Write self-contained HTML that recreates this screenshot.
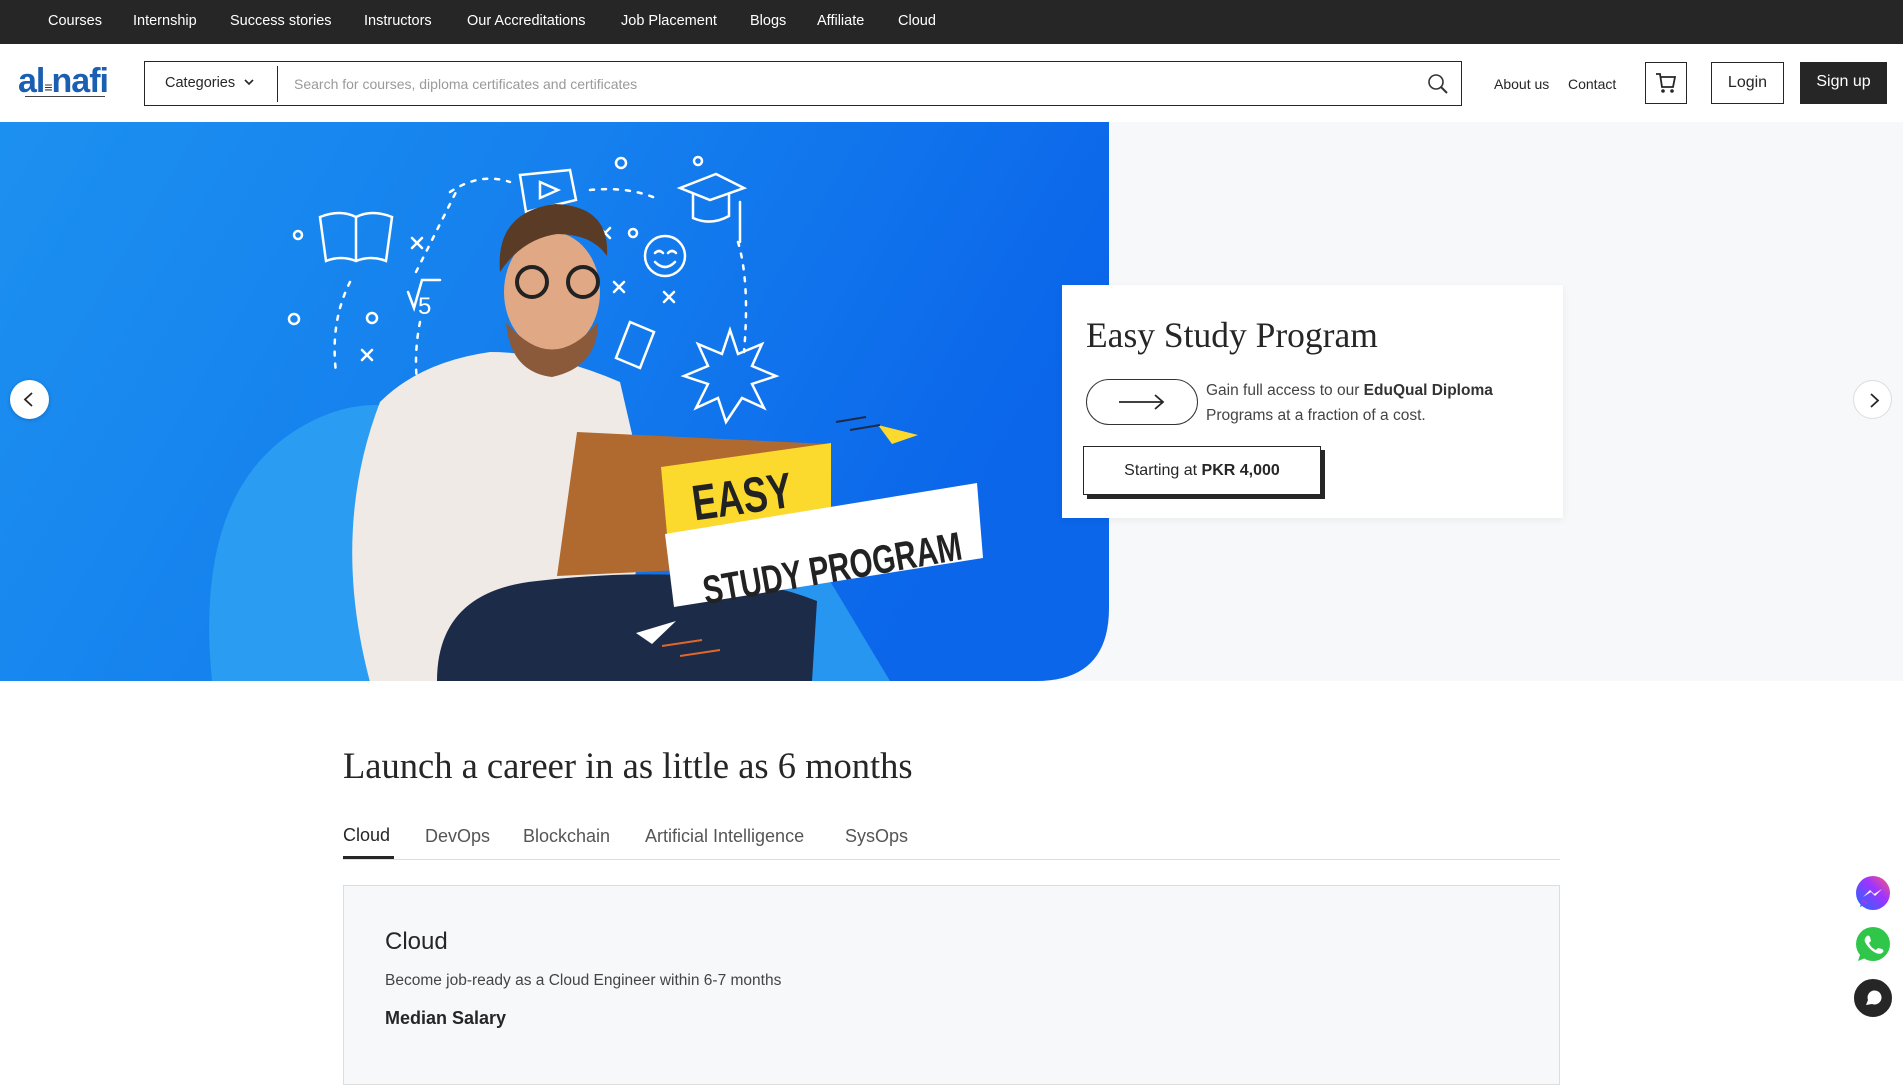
<!DOCTYPE html>
<html><head><meta charset="utf-8"><style>
*{margin:0;padding:0;box-sizing:border-box}
body{width:1903px;height:1039px;overflow:hidden;background:#fff;font-family:"Liberation Sans",sans-serif;color:#262626;position:relative}
.top{position:absolute;left:0;top:0;width:1903px;height:44px;background:#262626}
.top span{position:absolute;top:13px;color:#fff;font-size:14.5px}
.hdr{position:absolute;top:44px;left:0;width:1903px;height:78px;background:#fff}
.abs{position:absolute}
.hero{position:absolute;top:122px;left:0;width:1903px;height:559px;background:#f7f8fa}
</style></head><body>
<div class="top">
<span style="left:48px">Courses</span><span style="left:133px">Internship</span><span style="left:230px">Success stories</span><span style="left:364px">Instructors</span><span style="left:467px">Our Accreditations</span><span style="left:621px">Job Placement</span><span style="left:750px">Blogs</span><span style="left:817px">Affiliate</span><span style="left:898px">Cloud</span>
</div>
<div class="hdr">
 <div class="abs" style="left:18px;top:22px;font-size:34px;font-weight:bold;color:#1b5fb3;letter-spacing:-1px;line-height:30px;font-family:'Liberation Sans Narrow','Liberation Sans',sans-serif">al<span style="font-size:14px;color:#333">≡</span>nafi</div>
 <div class="abs" style="left:25px;top:52px;width:80px;height:3px;border-top:1px solid #444"></div>
 <div class="abs" style="left:144px;top:17px;width:1318px;height:45px;border:1.5px solid #262626"></div>
 <div class="abs" style="left:165px;top:31px;font-size:14.5px;color:#262626">Categories <svg width="12" height="10" viewBox="0 0 12 10" style="margin-left:4px"><path d="M2 3l4 4 4-4" fill="none" stroke="#262626" stroke-width="1.6"/></svg></div>
 <div class="abs" style="left:277px;top:22px;width:1px;height:36px;background:#262626"></div>
 <div class="abs" style="left:294px;top:32px;font-size:14px;color:#9a9a9a">Search for courses, diploma certificates and certificates</div>
 <svg class="abs" style="left:1426px;top:28px" width="24" height="24" viewBox="0 0 24 24"><circle cx="10" cy="10" r="7" fill="none" stroke="#333" stroke-width="1.6"/><path d="M15 15l6 6" stroke="#333" stroke-width="2"/></svg>
 <div class="abs" style="left:1494px;top:32px;font-size:14px">About us</div>
 <div class="abs" style="left:1568px;top:32px;font-size:14px">Contact</div>
 <div class="abs" style="left:1645px;top:18px;width:42px;height:42px;border:1.5px solid #262626"></div>
 <svg class="abs" style="left:1654px;top:27px" width="24" height="24" viewBox="0 0 24 24"><path d="M2 3h4l2 13h11l2-10H7" fill="none" stroke="#262626" stroke-width="1.8"/><circle cx="9" cy="20" r="1.8" fill="#262626"/><circle cx="18" cy="20" r="1.8" fill="#262626"/></svg>
 <div class="abs" style="left:1711px;top:18px;width:73px;height:42px;border:1.5px solid #262626;text-align:center;line-height:40px;font-size:16px">Login</div>
 <div class="abs" style="left:1800px;top:18px;width:87px;height:42px;background:#262626;color:#fff;text-align:center;line-height:40px;font-size:16px">Sign up</div>
</div>
<div class="hero">
<svg class="abs" style="left:0;top:0" width="1109" height="559" viewBox="0 0 1109 559">
<defs><linearGradient id="g" x1="0" y1="0" x2="1" y2="0.3"><stop offset="0" stop-color="#1c90f0"/><stop offset="0.5" stop-color="#1580ee"/><stop offset="1" stop-color="#0b66ea"/></linearGradient></defs>
<path d="M0 0H1109V486Q1109 559 1036 559H0Z" fill="url(#g)"/>
<g fill="none" stroke="#fff" stroke-width="2.5" stroke-linecap="round">
<path d="M320 95q20-8 36 0q16-8 36 0l-6 44q-15-6-30 0q-15-6-30 0z"/><path d="M356 95v44"/>
<path d="M520 53l50-5 6 30-50 12z"/><path d="M540 60l18 8-18 8z"/>
<path d="M680 66l36-14 28 14-34 12z"/><path d="M693 72v24q18 8 36-2v-22"/><path d="M740 80v40"/>
<circle cx="665" cy="134" r="20"/><path d="M655 131q4-4 8 0M668 131q4-4 8 0M655 140q10 10 20 0"/>
<path d="M726 300l-8-24-22 10 12-24-24-8 24-10-10-22 24 10 8-24 8 24 24-10-10 22 24 10-24 8 12 24-22-10z"/>
<path d="M630 200l24 10-14 36-24-10z"/>
<path d="M408 170l6 16 8-28h18"/><text x="418" y="192" fill="#fff" stroke="none" font-size="24" font-family="Liberation Sans">5</text>
<path d="M450 70q30-20 60-10M590 68q40-4 70 10M416 150q20-40 40-80M350 160q-20 40-14 90M420 200q-8 40 0 80M738 120q12 40 6 110" stroke-dasharray="4 8"/>
<path d="M412 116l10 10M422 116l-10 10M600 106l10 10M610 106l-10 10M362 228l10 10M372 228l-10 10M614 160l10 10M624 160l-10 10M664 170l10 10M674 170l-10 10"/>
<circle cx="298" cy="113" r="4"/><circle cx="633" cy="111" r="4"/><circle cx="698" cy="39" r="4"/><circle cx="621" cy="41" r="5"/><circle cx="294" cy="197" r="5"/><circle cx="372" cy="196" r="5"/>
</g>
<path d="M212 559q-20-200 100-260q80-40 160 20l100 240z" fill="#2a9cf2"/>
<path d="M700 559q40-120 130-100l60 100z" fill="#2796f0"/>
<path d="M380 280q40-40 110-50q60 0 130 30l30 130-40 170H370q-40-150 10-280z" fill="#efeae6"/>
<ellipse cx="552" cy="170" rx="48" ry="60" fill="#e0a885"/>
<path d="M500 150q-5-60 55-68q55 2 52 52q-15-22-50-22q-35 5-57 38z" fill="#5a3b25"/>
<path d="M506 200q46 55 92 0q0 45-46 55q-42-5-46-55z" fill="#8a5a3a"/>
<circle cx="532" cy="160" r="15" fill="none" stroke="#222" stroke-width="4"/><circle cx="583" cy="160" r="15" fill="none" stroke="#222" stroke-width="4"/>
<path d="M577 310l250 12-20 120-250 12z" fill="#b06a30"/>
<path d="M437 559q0-90 100-100q180-20 280 20l-5 80z" fill="#1c2b48"/>
<polygon points="661,345 831,321 831,400 667,412" fill="#fbd92d"/>
<polygon points="665,412 977,361 983,436 674,485" fill="#fff"/>
<text x="692" y="392" transform="rotate(-8 740 375)" textLength="100" lengthAdjust="spacingAndGlyphs" font-family="'Liberation Sans Narrow','Liberation Sans',sans-serif" font-weight="bold" font-size="50" fill="#222">EASY</text>
<text x="700" y="462" transform="rotate(-10 820 440)" textLength="262" lengthAdjust="spacingAndGlyphs" font-family="'Liberation Sans Narrow','Liberation Sans',sans-serif" font-weight="bold" font-size="40" fill="#222">STUDY PROGRAM</text>
<polygon points="878,303 918,313 892,322" fill="#fbd92d"/>
<polygon points="636,511 676,499 652,522" fill="#fff"/>
<path d="M662 524l40-6M680 534l40-6" stroke="#e0662a" stroke-width="2"/>
<path d="M836 300l30-5M850 308l30-5" stroke="#1a2a48" stroke-width="2"/>
</svg>
<div class="abs" style="left:1062px;top:163px;width:501px;height:233px;background:#fff;box-shadow:0 2px 8px rgba(0,0,0,0.06)">
 <div class="abs" style="left:24px;top:29px;font-family:'Liberation Serif',serif;font-size:35.5px;color:#262626;white-space:nowrap">Easy Study Program</div>
 <div class="abs" style="left:24px;top:94px;width:112px;height:46px;border:1.2px solid #333;border-radius:23px"></div>
 <svg class="abs" style="left:55px;top:107px" width="50" height="20" viewBox="0 0 50 20"><path d="M2 10h44M38 3l8 7-8 7" fill="none" stroke="#262626" stroke-width="1.8"/></svg>
 <div class="abs" style="left:144px;top:93px;font-size:15.5px;line-height:25px;color:#444;white-space:nowrap">Gain full access to our <b style="color:#333">EduQual Diploma</b><br>Programs at a fraction of a cost.</div>
 <div class="abs" style="left:25px;top:165px;width:238px;height:49px;background:#262626"></div>
 <div class="abs" style="left:21px;top:161px;width:238px;height:49px;background:#fff;border:1.3px solid #262626;text-align:center;line-height:47px;font-size:16px">Starting at <b>PKR 4,000</b></div>
</div>
<div class="abs" style="left:10px;top:258px;width:39px;height:39px;border-radius:50%;background:#fff;box-shadow:0 1px 4px rgba(0,0,0,.2)"><svg width="39" height="39" viewBox="0 0 39 39"><path d="M22 13l-7 6.5 7 6.5" fill="none" stroke="#262626" stroke-width="1.8"/></svg></div>
<div class="abs" style="left:1853px;top:258px;width:39px;height:39px;border-radius:50%;background:#fff;border:1px solid #ddd"><svg width="39" height="39" viewBox="0 0 39 39"><path d="M17 13l7 6.5-7 6.5" fill="none" stroke="#262626" stroke-width="1.8"/></svg></div>
</div>
<div class="abs" style="left:343px;top:744px;font-family:'Liberation Serif',serif;font-size:36.5px;color:#262626;white-space:nowrap">Launch a career in as little as 6 months</div>
<div class="abs" style="left:343px;top:825px;font-size:18px;color:#262626">Cloud</div>
<div class="abs" style="left:425px;top:826px;font-size:18px;color:#555">DevOps</div>
<div class="abs" style="left:523px;top:826px;font-size:18px;color:#555">Blockchain</div>
<div class="abs" style="left:645px;top:826px;font-size:18px;color:#555">Artificial Intelligence</div>
<div class="abs" style="left:845px;top:826px;font-size:18px;color:#555">SysOps</div>
<div class="abs" style="left:343px;top:859px;width:1217px;height:1px;background:#ddd"></div>
<div class="abs" style="left:343px;top:856px;width:51px;height:3px;background:#262626"></div>
<div class="abs" style="left:343px;top:885px;width:1217px;height:200px;background:#f7f8fa;border:1px solid #ddd"></div>
<div class="abs" style="left:385px;top:928px;font-size:24px;color:#262626">Cloud</div>
<div class="abs" style="left:385px;top:972px;font-size:15.5px;color:#444">Become job-ready as a Cloud Engineer within 6-7 months</div>
<div class="abs" style="left:385px;top:1008px;font-size:18px;font-weight:bold;color:#262626">Median Salary</div>
<svg class="abs" style="left:1853px;top:874px" width="40" height="40" viewBox="0 0 40 40"><defs><linearGradient id="m" x1="0" y1="1" x2="1" y2="0"><stop offset="0" stop-color="#1a6cff"/><stop offset=".6" stop-color="#a033ff"/><stop offset="1" stop-color="#ff5a6e"/></linearGradient></defs><circle cx="20" cy="19" r="17" fill="url(#m)"/><path d="M7 33l2-8 6 4z" fill="url(#m)"/><path d="M10 23l7-7 4 4 8-5-7 7-4-4z" fill="#fff"/></svg>
<svg class="abs" style="left:1853px;top:925px" width="40" height="40" viewBox="0 0 40 40"><circle cx="20" cy="19" r="17" fill="#2fc64a"/><path d="M5 36l3-9 7 5z" fill="#2fc64a"/><path d="M13 12q2-3 4 0l1 4-2 2q2 5 7 7l2-2 4 1q3 2 0 4q-3 2-8-1q-6-4-9-10q-1-3 1-5z" fill="#fff"/></svg>
<svg class="abs" style="left:1849px;top:974px" width="48" height="48" viewBox="0 0 48 48"><circle cx="24" cy="24" r="20" fill="#262626" stroke="#fff" stroke-width="2"/><path d="M17 31l2-5a7 7 0 1 1 4 4z" fill="#fff"/></svg>
</body></html>
